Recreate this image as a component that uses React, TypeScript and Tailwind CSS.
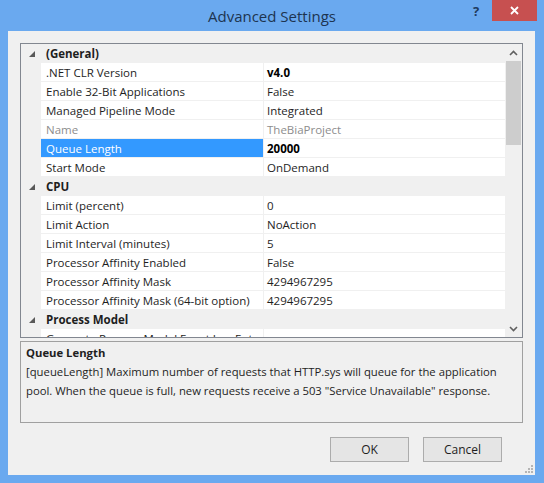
import React from "react";

type Row =
  | { kind: "cat"; label: string }
  | { kind: "prop"; name: string; value: string; bold?: boolean; disabled?: boolean; selected?: boolean };

const rows: Row[] = [
  { kind: "cat", label: "(General)" },
  { kind: "prop", name: ".NET CLR Version", value: "v4.0", bold: true },
  { kind: "prop", name: "Enable 32-Bit Applications", value: "False" },
  { kind: "prop", name: "Managed Pipeline Mode", value: "Integrated" },
  { kind: "prop", name: "Name", value: "TheBiaProject", disabled: true },
  { kind: "prop", name: "Queue Length", value: "20000", bold: true, selected: true },
  { kind: "prop", name: "Start Mode", value: "OnDemand" },
  { kind: "cat", label: "CPU" },
  { kind: "prop", name: "Limit (percent)", value: "0" },
  { kind: "prop", name: "Limit Action", value: "NoAction" },
  { kind: "prop", name: "Limit Interval (minutes)", value: "5" },
  { kind: "prop", name: "Processor Affinity Enabled", value: "False" },
  { kind: "prop", name: "Processor Affinity Mask", value: "4294967295" },
  { kind: "prop", name: "Processor Affinity Mask (64-bit option)", value: "4294967295" },
  { kind: "cat", label: "Process Model" },
  { kind: "prop", name: "Generate Process Model Event Log Entry", value: "" },
];

function Expander() {
  return (
    <svg width="6" height="6" viewBox="0 0 6 6" className="block">
      <polygon points="6,0 6,6 0,6" fill="#595959" />
    </svg>
  );
}

function GridRow({ row }: { row: Row }) {
  if (row.kind === "cat") {
    return (
      <div className="flex h-[19px] shrink-0 items-center bg-[#f0f0f0] pt-[1px]">
        <div className="flex w-[20px] shrink-0 justify-center pl-[1px]">
          <Expander />
        </div>
        <span className="pl-[5px] font-bold text-[#1e1e1e]">{row.label}</span>
      </div>
    );
  }
  return (
    <div className="flex h-[19px] shrink-0">
      <div className="w-[20px] shrink-0 bg-[#f0f0f0]" />
      <div
        className={
          "flex w-[222px] shrink-0 items-center border-b border-[#f0f0f0] pl-[5px] pt-[1px] " +
          (row.selected ? "bg-[#3399ff] text-white" : row.disabled ? "bg-white text-[#8d8d8d]" : "bg-white text-[#1e1e1e]")
        }
      >
        <span className="whitespace-nowrap">{row.name}</span>
      </div>
      <div
        className={
          "flex flex-1 items-center border-b border-l border-[#f0f0f0] bg-white pl-[3px] pt-[1px] " +
          (row.bold ? "font-bold text-black " : "") +
          (row.disabled ? "text-[#8d8d8d]" : "text-[#1e1e1e]")
        }
      >
        {row.value}
      </div>
    </div>
  );
}

function ScrollBar() {
  return (
    <div className="flex w-[17px] shrink-0 flex-col bg-[#f0f0f0]">
      <div className="flex h-[17px] items-center justify-center pt-[1px]">
        <svg width="9" height="6" viewBox="0 0 9 6">
          <polyline points="1,5 4.5,1.5 8,5" fill="none" stroke="#606060" strokeWidth="1.6" />
        </svg>
      </div>
      <div className="mx-[1px] h-[84px] bg-[#cdcdcd]" />
      <div className="flex-1" />
      <div className="flex h-[17px] items-center justify-center">
        <svg width="9" height="6" viewBox="0 0 9 6">
          <polyline points="1,1 4.5,4.5 8,1" fill="none" stroke="#606060" strokeWidth="1.6" />
        </svg>
      </div>
    </div>
  );
}

export default function App() {
  return (
    <div
      className="flex h-[483px] w-[544px] flex-col bg-[#6aa9ef] text-[11.5px] leading-none"
      style={{ fontFamily: '"Open Sans", "Noto Sans", "Liberation Sans", sans-serif' }}
    >
      <div className="relative flex h-[31px] shrink-0 items-center justify-center">
        <span className="pt-[1px] text-[15px] text-[#1d3450]">Advanced Settings</span>
        <span className="absolute left-[473px] top-[5px] text-[13px] font-bold text-[#203a5e]">?</span>
        <div className="absolute left-[492px] top-0 flex h-[21px] w-[45px] items-center justify-center bg-[#c75050]">
          <svg width="9" height="9" viewBox="0 0 9 9">
            <path d="M1 1 L8 8 M8 1 L1 8" stroke="white" strokeWidth="1.8" />
          </svg>
        </div>
      </div>

      <div className="mx-[8px] mb-[8px] mr-[9px] flex flex-1 flex-col bg-[#f0f0f0] px-[12px] pt-[12px]">
        <div className="flex h-[295px] shrink-0 border border-[#828790] bg-white">
          <div className="flex flex-1 flex-col overflow-hidden">
            {rows.map((r, i) => (
              <GridRow key={i} row={r} />
            ))}
          </div>
          <ScrollBar />
        </div>

        <div className="mt-[3px] h-[82px] shrink-0 border border-[#a0a0a0] bg-[#f0f0f0] px-[5px] pt-[1px] text-[11.3px] text-[#1e1e1e]">
          <div className="font-bold leading-[19px]">Queue Length</div>
          <div className="leading-[19px]">
            [queueLength] Maximum number of requests that HTTP.sys will queue for the application pool. When the queue is
            full, new requests receive a 503 "Service Unavailable" response.
          </div>
        </div>

        <div className="relative flex flex-1 items-start justify-end gap-[14px] pr-[21px] pt-[14px]">
          <button className="h-[25px] w-[79px] border border-[#acacac] bg-[#e5e5e5] text-[12px] text-[#1e1e1e]">
            OK
          </button>
          <button className="h-[25px] w-[79px] border border-[#acacac] bg-[#e5e5e5] text-[12px] text-[#1e1e1e]">
            Cancel
          </button>
          <svg className="absolute bottom-[2px] right-[-10px]" width="8" height="8" viewBox="0 0 8 8">
            <g fill="#b5b5b5">
              <rect x="6" y="0" width="2" height="2" />
              <rect x="3" y="3" width="2" height="2" />
              <rect x="6" y="3" width="2" height="2" />
              <rect x="0" y="6" width="2" height="2" />
              <rect x="3" y="6" width="2" height="2" />
              <rect x="6" y="6" width="2" height="2" />
            </g>
          </svg>
        </div>
      </div>
    </div>
  );
}
